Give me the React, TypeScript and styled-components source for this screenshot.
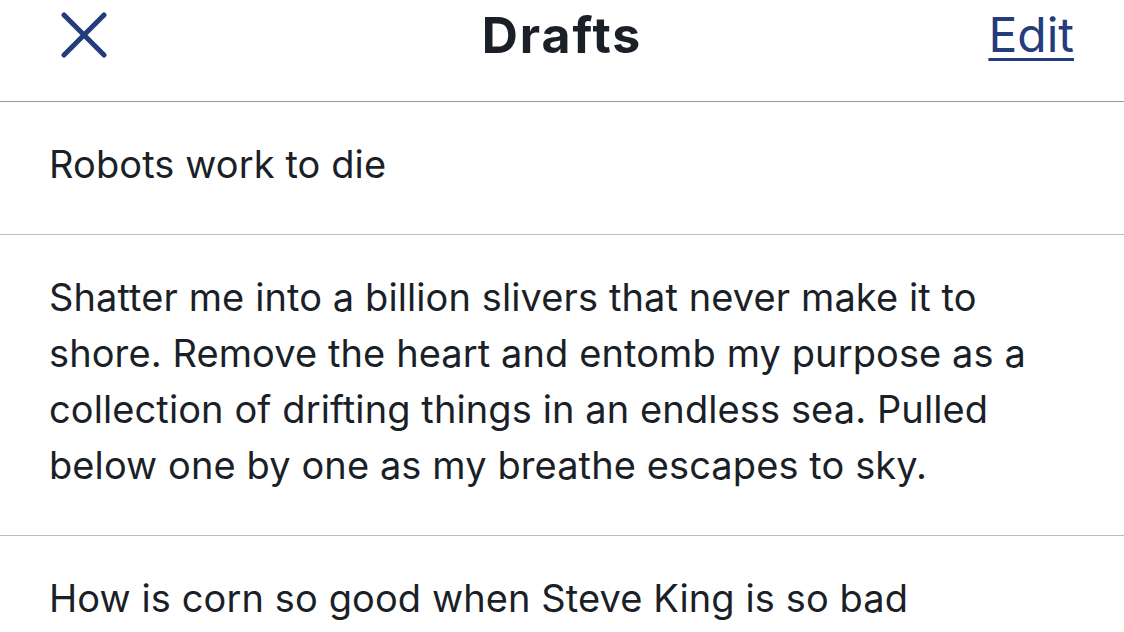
import React from 'react';
import styled, { createGlobalStyle } from 'styled-components';

const GlobalStyle = createGlobalStyle`
    html, body {
        margin: 0;
        padding: 0;
        background: #ffffff;
    }
    body {
        font-family: Inter, "Noto Sans", "Liberation Sans", sans-serif;
        color: #1b1f27;
    }
`

const drafts = [
    'Robots work to die',
    'Shatter me into a billion slivers that never make it to shore. Remove the heart and entomb my purpose as a collection of drifting things in an endless sea. Pulled below one by one as my breathe escapes to sky.',
    'How is corn so good when Steve King is so bad',
]

export default function App() {
    return (
        <Screen>
            <GlobalStyle />
            <Header>
                <CloseButton aria-label="Close">
                    <svg width="46" height="46" viewBox="0 0 46 46" fill="none">
                        <path d="M3 3 L43 43 M43 3 L3 43" stroke="#243b7c" strokeWidth="5" strokeLinecap="round" />
                    </svg>
                </CloseButton>
                <Title>Drafts</Title>
                <EditLink>Edit</EditLink>
            </Header>
            <List>
                {drafts.map((text, i) => (
                    <DraftRow key={i}>{text}</DraftRow>
                ))}
            </List>
        </Screen>
    );
}

const Screen = styled.div`
    width: 1124px;
    height: 632px;
    overflow: hidden;
    background: #ffffff;
`

const Header = styled.header`
    height: 102px;
    box-sizing: border-box;
    padding: 0 50px 32px 61px;
    display: flex;
    align-items: center;
    justify-content: space-between;
    border-bottom: 1px solid #9a9a9a;
    position: relative;
`

const CloseButton = styled.button`
    border: none;
    background: none;
    padding: 0;
    width: 46px;
    height: 46px;
    display: flex;
    cursor: pointer;
`

const Title = styled.h1`
    margin: 0;
    position: absolute;
    left: 0;
    right: 0;
    top: 8px;
    text-align: center;
    font-size: 50px;
    font-weight: 700;
    letter-spacing: 2px;
    line-height: 54px;
    color: #1b1f27;
    pointer-events: none;
`

const EditLink = styled.a`
    font-size: 48px;
    line-height: 54px;
    color: #243b7c;
    text-decoration: underline;
    text-decoration-thickness: 3px;
    text-underline-offset: 6px;
    cursor: pointer;
`

const List = styled.div`
    display: flex;
    flex-direction: column;
`

const DraftRow = styled.div`
    padding: 34px 70px 42px 49px;
    font-size: 38px;
    letter-spacing: 0.1px;
    line-height: 56px;
    border-bottom: 1px solid #bdbdbd;
`
